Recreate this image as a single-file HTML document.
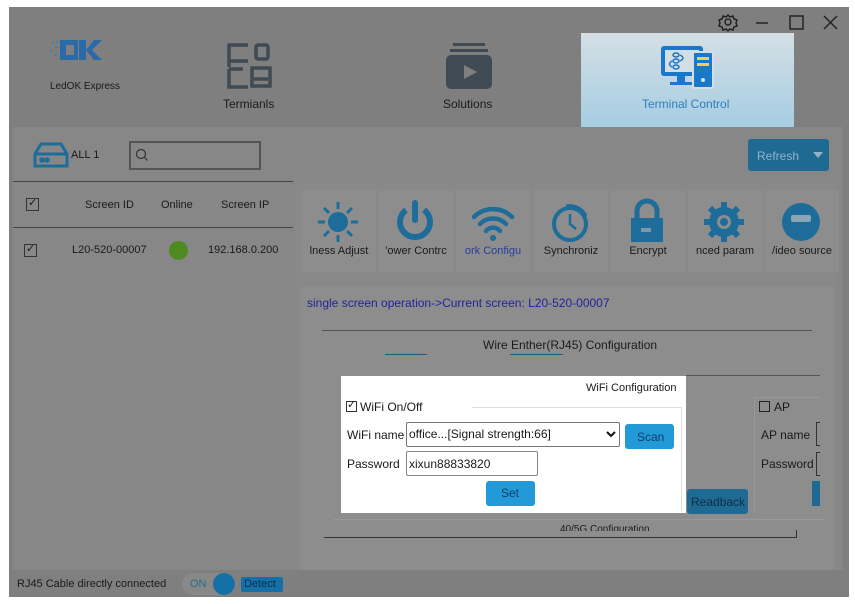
<!DOCTYPE html>
<html><head><meta charset="utf-8"><style>
*{margin:0;padding:0;box-sizing:border-box}
body{width:855px;height:604px;background:#fff;font-family:"Liberation Sans",sans-serif;position:relative;overflow:hidden;color:#1a1a1a}
.a{position:absolute}
.t{position:absolute;white-space:nowrap;font-size:12px}
.ic{fill:#1d6c9a}
.tile{position:absolute;top:190px;width:74px;height:82px;background:#8d8d8d}
.tile .t{top:55px;width:74px;text-align:center;font-size:11px;overflow:hidden;left:0}
</style></head><body>
<div class="a" style="left:9px;top:7px;width:840px;height:590px;background:#7f7f7f"></div>
<!-- logo -->
<svg class="a" style="left:46px;top:36px" width="60" height="28"><g fill="#2a6aa8"><rect x="14" y="4" width="18" height="20"/><rect x="33" y="4" width="7" height="20"/><polygon points="40,14 48,4 56,4 46,14 56,24 48,24"/></g><rect x="20" y="9" width="8" height="10" fill="#7f7f7f"/><g fill="#4a7fa8"><rect x="6" y="6" width="2" height="2"/><rect x="9" y="10" width="3" height="2"/><rect x="4" y="14" width="2" height="2"/><rect x="8" y="18" width="3" height="2"/><rect x="10" y="5" width="2" height="2"/></g></svg>
<div class="t" style="left:50px;top:81px;font-size:10px">LedOK Express</div>
<!-- Termianls icon -->
<svg class="a" style="left:226px;top:42px" width="48" height="48" fill="none" stroke="#3f4a52" stroke-width="3.5"><path d="M22 3H3v16h19M3 19v6M3 27v18h19M3 27h14"/><rect x="30" y="3" width="12" height="14" rx="2"/><rect x="26" y="26" width="18" height="18"/><path d="M28 37h14"/></svg>
<div class="t" style="left:223px;top:97px">Termianls</div>
<!-- Solutions icon -->
<svg class="a" style="left:446px;top:43px" width="48" height="48"><rect x="7" y="0" width="32" height="3" fill="#3f4a52"/><rect x="4" y="6" width="38" height="3" fill="#3f4a52"/><rect x="0" y="12" width="46" height="34" rx="5" fill="#3f4a52"/><polygon points="18,22 31,29 18,36" fill="#7f7f7f"/></svg>
<div class="t" style="left:443px;top:97px">Solutions</div>
<!-- Terminal control tab -->
<div class="a" style="left:581px;top:33px;width:213px;height:94px;background:linear-gradient(#d4dfe5,#a6cde2)"></div>
<svg class="a" style="left:660px;top:44px" width="56" height="46"><rect x="1" y="2" width="42" height="30" rx="3" fill="#1a78c8"/><rect x="5" y="6" width="34" height="22" fill="#d4dfe5"/><rect x="17" y="32" width="8" height="7" fill="#1a78c8"/><rect x="10" y="38" width="22" height="3" fill="#1a78c8"/><rect x="33" y="8" width="20" height="36" rx="2" fill="#1a78c8" stroke="#d4dfe5" stroke-width="2"/><rect x="37" y="13" width="12" height="3" fill="#f0d050"/><rect x="37" y="19" width="12" height="3" fill="#f0d050"/><circle cx="43" cy="36" r="2" fill="#d4dfe5"/><g fill="none" stroke="#1a78c8" stroke-width="1.5"><ellipse cx="16" cy="11" rx="3" ry="2"/><ellipse cx="16" cy="17" rx="3" ry="2"/><ellipse cx="16" cy="23" rx="3" ry="2"/><path d="M20 11q6 3 0 6M12 17q-5 3 0 6"/></g></svg>
<div class="t" style="left:642px;top:97px;color:#2a7ec0">Terminal Control</div>
<!-- window controls -->
<svg class="a" style="left:718px;top:13px" width="130" height="20" fill="none" stroke="#222" stroke-width="1.5"><circle cx="10" cy="9" r="3"/><path d="M10 2l2 2 3-1 1 3 3 1-1 3 1 3-3 1-1 3-3-1-2 2-2-2-3 1-1-3-3-1 1-3-1-3 3-1 1-3 3 1z"/><path d="M38 10h12"/><rect x="72" y="3" width="13" height="13"/><path d="M106 3l13 13M119 3l-13 13"/></svg>
<!-- toolbar -->
<div class="a" style="left:13px;top:127px;width:830px;height:443px;background:#878787"></div>
<svg class="a" style="left:33px;top:141px" width="36" height="28" fill="none" stroke="#1d6c9a" stroke-width="3"><path d="M8 3h20l6 10v12H2V13z"/><path d="M2 13h32"/><circle cx="9" cy="19" r="1.3" fill="#1d6c9a"/><circle cx="14" cy="19" r="1.3" fill="#1d6c9a"/></svg>
<div class="t" style="left:71px;top:149px;font-size:11px">ALL 1</div>
<div class="a" style="left:129px;top:141px;width:132px;height:29px;border:2px solid #555"></div>
<svg class="a" style="left:135px;top:148px" width="14" height="14" fill="none" stroke="#333" stroke-width="1.2"><circle cx="6" cy="6" r="4.5"/><path d="M9.5 9.5l3 3"/></svg>
<div class="a" style="left:748px;top:139px;width:81px;height:32px;background:#1f6a92;border-radius:3px"></div>
<div class="t" style="left:757px;top:149px;color:#8fb4c8">Refresh</div>
<svg class="a" style="left:813px;top:152px" width="10" height="6"><polygon points="0,0 10,0 5,6" fill="#8fb4c8"/></svg>
<!-- left list -->
<div class="a" style="left:13px;top:181px;width:280px;height:1px;background:#444"></div>
<div class="a" style="left:13px;top:227px;width:280px;height:1px;background:#444"></div>
<div class="a" style="left:26px;top:198px;width:13px;height:13px;border:1px solid #333"></div>
<div class="t" style="left:28px;top:196px;font-size:11px">✓</div>
<div class="t" style="left:85px;top:199px;font-size:11px">Screen ID</div>
<div class="t" style="left:161px;top:199px;font-size:11px">Online</div>
<div class="t" style="left:221px;top:199px;font-size:11px">Screen IP</div>
<div class="a" style="left:24px;top:244px;width:13px;height:13px;border:1px solid #333"></div>
<div class="t" style="left:26px;top:242px;font-size:11px">✓</div>
<div class="t" style="left:72px;top:244px;font-size:11px">L20-520-00007</div>
<div class="a" style="left:169px;top:241px;width:19px;height:19px;border-radius:50%;background:#4e8a1f"></div>
<div class="t" style="left:208px;top:244px;font-size:11px">192.168.0.200</div>
<!-- right panel -->
<div class="a" style="left:296px;top:183px;width:540px;height:387px;background:#898989"></div>
<div class="tile" style="left:302px"><svg class="a" style="left:14px;top:10px" width="44" height="44"><g stroke="#1d6c9a" stroke-width="3"><path d="M22 2v7M22 35v7M2 22h7M35 22h7M8 8l5 5M31 31l5 5M36 8l-5 5M8 36l5-5"/></g><circle cx="22" cy="22" r="10" class="ic"/></svg><div class="t">lness Adjust</div></div>
<div class="tile" style="left:379px"><svg class="a" style="left:14px;top:10px" width="44" height="44" fill="none" stroke="#1d6c9a" stroke-width="6"><path d="M13 10a15 15 0 1 0 18 0"/><path d="M22 3v17" stroke-linecap="round"/></svg><div class="t">'ower Contrc</div></div>
<div class="tile" style="left:456px"><svg class="a" style="left:14px;top:10px" width="46" height="44" fill="none" stroke="#1d6c9a" stroke-width="4.5" stroke-linecap="round"><path d="M4 17a27 27 0 0 1 38 0M10 24a18 18 0 0 1 26 0M16 31a9 9 0 0 1 14 0"/><circle cx="23" cy="38" r="3" fill="#1d6c9a" stroke="none"/></svg><div class="t" style="color:#28409a">ork Configu</div></div>
<div class="tile" style="left:534px"><svg class="a" style="left:14px;top:10px" width="44" height="44" fill="none" stroke="#1d6c9a" stroke-width="4"><circle cx="22" cy="24" r="16"/><path d="M22 14v10l6 5" stroke-width="2.5"/><path d="M18 6a18 18 0 0 1 20 10" stroke-width="3"/></svg><div class="t">Synchroniz</div></div>
<div class="tile" style="left:611px"><svg class="a" style="left:14px;top:8px" width="44" height="46"><path d="M12 20v-7a10 10 0 0 1 20 0v7" fill="none" stroke="#1d6c9a" stroke-width="5"/><rect x="6" y="20" width="32" height="24" class="ic"/><rect x="16" y="30" width="10" height="4" fill="#7a9aaa"/></svg><div class="t">Encrypt</div></div>
<div class="tile" style="left:688px"><svg class="a" style="left:14px;top:10px" width="44" height="44"><circle cx="22" cy="22" r="15" class="ic"/><g stroke="#1d6c9a" stroke-width="6"><path d="M22 2v40M2 22h40M8 8l28 28M36 8L8 36"/></g><circle cx="22" cy="22" r="7" fill="#8d8d8d"/><circle cx="22" cy="22" r="4" class="ic"/></svg><div class="t">nced param</div></div>
<div class="tile" style="left:765px"><svg class="a" style="left:14px;top:10px" width="44" height="44"><circle cx="22" cy="22" r="19" class="ic"/><rect x="12" y="15" width="20" height="7" rx="2" fill="#8aa6b6"/></svg><div class="t">/ideo source</div></div>
<!-- content -->
<div class="a" style="left:300px;top:287px;width:533px;height:283px;background:#8d8d8d"></div>
<div class="t" style="left:307px;top:296px;color:#23239a">single screen operation->Current screen: L20-520-00007</div>
<div class="a" style="left:322px;top:330px;width:490px;height:1px;background:#555"></div>
<div class="t" style="left:483px;top:338px">Wire Enther(RJ45) Configuration</div>
<div class="a" style="left:385px;top:354px;width:42px;height:1px;background:#1d5c80"></div>
<div class="a" style="left:510px;top:354px;width:53px;height:1px;background:#1d5c80"></div>
<div class="a" style="left:686px;top:375px;width:134px;height:1px;background:#555"></div>
<div class="a" style="left:754px;top:397px;width:66px;height:116px;border-left:1px solid #999;border-top:1px solid #999"></div>
<div class="a" style="left:759px;top:401px;width:11px;height:11px;border:1px solid #222;background:#8d8d8d"></div>
<div class="t" style="left:774px;top:400px">AP</div>
<div class="t" style="left:761px;top:428px">AP name</div>
<div class="t" style="left:761px;top:457px">Password</div>
<div class="a" style="left:816px;top:422px;width:4px;height:24px;border:1px solid #333;border-right:none"></div>
<div class="a" style="left:816px;top:452px;width:4px;height:24px;border:1px solid #333;border-right:none"></div>
<div class="a" style="left:812px;top:481px;width:8px;height:25px;background:#1f6a92"></div>
<div class="a" style="left:687px;top:489px;width:61px;height:25px;background:#1f6a92;border-radius:3px"></div>
<div class="t" style="left:691px;top:495px;color:#0d2f48">Readback</div>
<div class="a" style="left:334px;top:519px;width:490px;height:1px;background:#999"></div>
<div class="a" style="left:324px;top:537px;width:473px;height:1px;background:#333"></div>
<div class="a" style="left:796px;top:530px;width:1px;height:8px;background:#333"></div>
<div class="t" style="left:560px;top:524px;font-size:10px;height:7px;overflow:hidden">40/5G Configuration</div>
<!-- dialog -->
<div class="a" style="left:341px;top:376px;width:345px;height:137px;background:#fff"></div>
<div class="t" style="left:586px;top:382px;font-size:11px">WiFi Configuration</div>
<div class="a" style="left:345px;top:407px;width:337px;height:104px;border-top:1px solid #ddd;border-right:1px solid #ddd"></div>
<div class="a" style="left:344px;top:400px;width:128px;height:14px;background:#fff"></div>
<div class="a" style="left:346px;top:401px;width:11px;height:11px;border:1px solid #333"></div>
<div class="t" style="left:347px;top:398px;font-size:11px">✓</div>
<div class="t" style="left:360px;top:400px">WiFi On/Off</div>
<div class="t" style="left:347px;top:428px">WiFi name</div>
<div class="a" style="left:406px;top:422px;width:214px;height:25px;border:1px solid #777;border-radius:2px"></div>
<div class="t" style="left:409px;top:427px">office...[Signal strength:66]</div>
<svg class="a" style="left:606px;top:431px" width="10" height="7"><path d="M1 1l4 4 4-4" fill="none" stroke="#111" stroke-width="2"/></svg>
<div class="a" style="left:625px;top:424px;width:49px;height:25px;background:#239ad8;border-radius:3px"></div>
<div class="t" style="left:637px;top:430px;color:#0d3f66">Scan</div>
<div class="t" style="left:347px;top:457px">Password</div>
<div class="a" style="left:406px;top:451px;width:132px;height:25px;border:1px solid #888;border-radius:2px"></div>
<div class="t" style="left:409px;top:457px">xixun88833820</div>
<div class="a" style="left:486px;top:481px;width:49px;height:25px;background:#239ad8;border-radius:3px"></div>
<div class="t" style="left:501px;top:486px;color:#0d3f66">Set</div>
<!-- status -->
<div class="t" style="left:17px;top:578px;font-size:11px">RJ45 Cable directly connected</div>
<div class="a" style="left:182px;top:573px;width:54px;height:22px;border-radius:11px;background:#888"></div>
<div class="t" style="left:190px;top:578px;font-size:11px;color:#2a6a90">ON</div>
<div class="a" style="left:213px;top:573px;width:22px;height:22px;border-radius:50%;background:#1670a8"></div>
<div class="a" style="left:241px;top:577px;width:42px;height:15px;background:#1670a8;border-radius:2px"></div>
<div class="t" style="left:244px;top:578px;font-size:11px;color:#0d2f48">Detect</div>
</body></html>
